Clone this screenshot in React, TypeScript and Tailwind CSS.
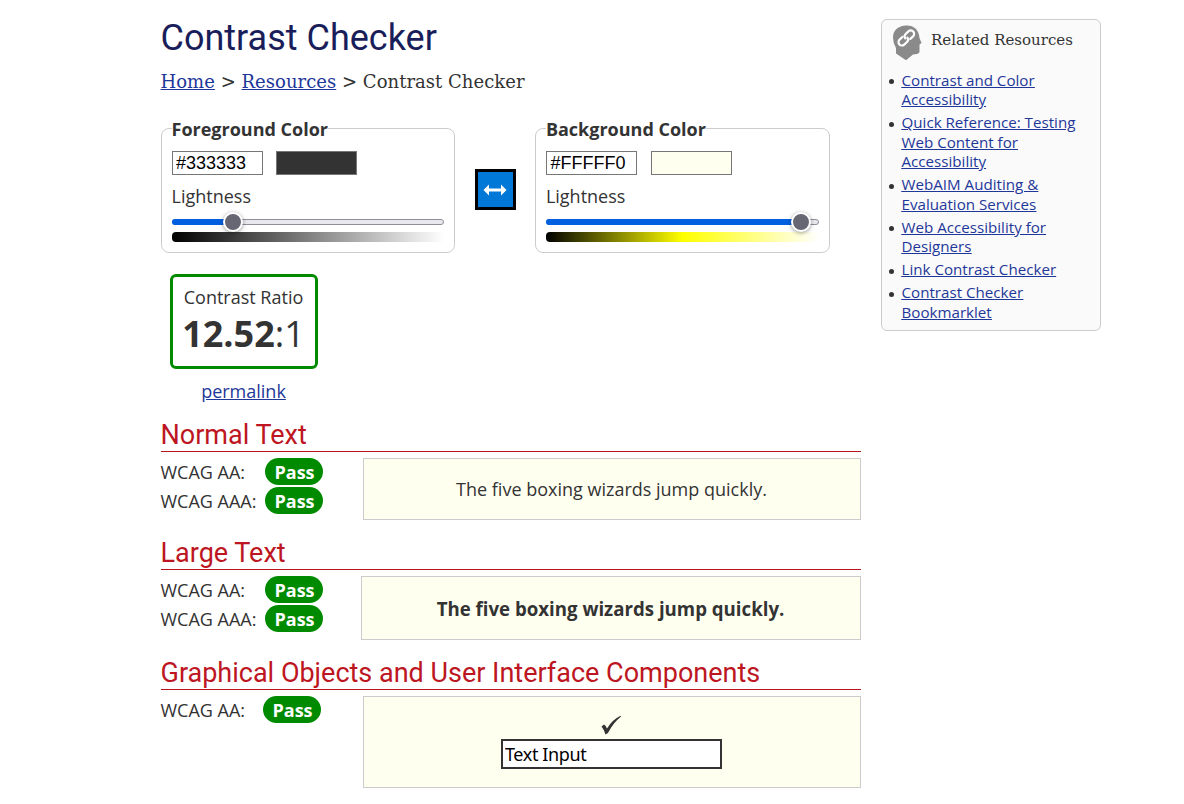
import type { ReactNode } from "react";

const link = "text-[#1e3799] underline";

type ColorPanelProps = {
  title: string;
  value: string;
  swatch: string;
  percent: number;
  gradient: string;
};

function ColorPanel({ title, value, swatch, percent, gradient }: ColorPanelProps) {
  return (
    <fieldset className="h-[137px] w-[294.800px] shrink-0 rounded-lg border border-[#cccccc] px-[10px]">
      <legend className="h-[25px] text-[18px] leading-[26px] font-bold whitespace-nowrap">{title}</legend>
      <div className="mt-[10px] flex gap-[13.700px]">
        <input
          readOnly
          aria-label={`${title} value`}
          value={value}
          className="h-6 w-[91px] border border-[#767676] bg-white px-[3.500px] font-['Liberation_Sans',sans-serif] text-[18px] leading-[20px] text-black outline-none"
        />
        <div className={`h-6 w-[81px] border border-[#767676] ${swatch}`} />
      </div>
      <div className="mt-[8px] h-[26px] text-[18px] leading-[26px]">Lightness</div>
      <div className="relative mt-[10px] flex h-[6px] rounded-full border border-[#8f8f9d] bg-[#e9e9ed]">
        <div className="-my-px -ml-px h-[6px] rounded-full bg-[#0060df]" style={{ width: `${percent}%` }} />
        <div
          className="absolute top-1/2 size-[20px] -translate-x-1/2 -translate-y-1/2 rounded-full border-2 border-white bg-[#676774] shadow-[0_1px_4px_rgba(0,0,0,0.4)]"
          style={{ left: `${percent}%` }}
        />
      </div>
      <div className={`mt-[7px] h-[10px] rounded-[4px] ${gradient}`} />
    </fieldset>
  );
}

function Rating({ label, wide = true }: { label: string; wide?: boolean }) {
  return (
    <div className="flex h-[29px] items-start">
      <span className={`${wide ? "w-[104px]" : "w-[102px]"} text-[18px] leading-[29px] whitespace-nowrap`}>{label}</span>
      <span className="h-[27px] w-[58px] rounded-full bg-[#008a00] pl-[2px] text-center text-[18px] leading-[29px] font-bold text-white">
        Pass
      </span>
    </div>
  );
}

function Section({ title, height, ratings, children }: { title: string; height: string; ratings: ReactNode; children: ReactNode }) {
  return (
    <section className={height}>
      <h2 className="h-[34px] border-b border-[#b81420] font-[Roboto,sans-serif] text-[27px] leading-[34px] whitespace-nowrap text-[#bd1622]">
        {title}
      </h2>
      <div className="flex items-start justify-between pt-[6px]">
        <div>{ratings}</div>
        {children}
      </div>
    </section>
  );
}

const resources = [
  ["Contrast and Color", "Accessibility"],
  ["Quick Reference: Testing", "Web Content for", "Accessibility"],
  ["WebAIM Auditing &", "Evaluation Services"],
  ["Web Accessibility for", "Designers"],
  ["Link Contrast Checker"],
  ["Contrast Checker", "Bookmarklet"],
];

export default function App() {
  return (
    <div className="flex h-[804px] w-[1184px] items-start overflow-hidden bg-white pl-[160.500px] font-['Open_Sans',sans-serif] text-[#333333]">
      <main className="w-[700px] shrink-0 pt-[17px]">
        <h1 className="h-[51px] font-[Roboto,sans-serif] text-[36px] leading-[43px] text-[#191e5a]">Contrast Checker</h1>
        <nav className="h-[48px] font-['DejaVu_Serif',serif] text-[18px] leading-[28px] tracking-[0.030px] whitespace-nowrap">
          <a className={link} href="#home">Home</a> &gt; <a className={link} href="#resources">Resources</a> &gt; Contrast Checker
        </nav>
        <div className="flex">
          <ColorPanel
            title="Foreground Color"
            value="#333333"
            swatch="bg-[#333333]"
            percent={22.3}
            gradient="bg-[linear-gradient(to_right,#000,#808080,#fff)]"
          />
          <button
            aria-label="Swap colors"
            className="mx-[19.300px] mt-[53px] flex h-[41px] w-[41px] shrink-0 items-center justify-center border-[3px] border-black bg-[#0078d7]"
          >
            <svg className="shrink-0" width="24" height="12" viewBox="0 0 24 12" fill="white" aria-hidden="true">
              <path d="M.5 6 6 .5v4h12v-4L23.500 6 18 11.500v-4H6v4z" />
            </svg>
          </button>
          <ColorPanel
            title="Background Color"
            value="#FFFFF0"
            swatch="bg-[#fffff0]"
            percent={93.9}
            gradient="bg-[linear-gradient(to_right,#000,#ff0,#fff)]"
          />
        </div>
        <div className="mt-[21px] ml-[9px] flex h-[144px] w-[148px] flex-col items-center">
          <div className="h-[95px] w-full rounded-md border-[3px] border-[#008a00] text-center">
            <div className="h-[32px] pt-[7px] text-[18px] leading-[26px] whitespace-nowrap">Contrast Ratio</div>
            <div className="text-[36px] leading-[50px] whitespace-nowrap">
              <b>12.52</b>:1
            </div>
          </div>
          <a className={`${link} mt-[9px] text-[18px] leading-[26px]`} href="#permalink">permalink</a>
        </div>
        <Section
          title="Normal Text"
          height="h-[118px]"
          ratings={<><Rating label="WCAG AA:" /><Rating label="WCAG AAA:" /></>}
        >
          <div className="flex h-[62px] w-[498px] items-center justify-center border border-[#cccccc] bg-[#fffff0] text-[18px]">
            The five boxing wizards jump quickly.
          </div>
        </Section>
        <Section
          title="Large Text"
          height="h-[120px]"
          ratings={<><Rating label="WCAG AA:" /><Rating label="WCAG AAA:" /></>}
        >
          <div className="flex h-[64px] w-[500px] items-center justify-center border border-[#cccccc] bg-[#fffff0] pt-[2px] text-[18.670px] font-bold">
            The five boxing wizards jump quickly.
          </div>
        </Section>
        <Section
          title="Graphical Objects and User Interface Components"
          height="h-[140px]"
          ratings={<Rating label="WCAG AA:" wide={false} />}
        >
          <div className="flex h-[92px] w-[498px] flex-col items-center border border-[#cccccc] bg-[#fffff0] pt-[18px]">
            <svg className="mr-[1px] shrink-0" width="22" height="20" viewBox="0 0 22 20" fill="#333333" aria-hidden="true">
              <path d="M1.500 11.500 4 9.500Q5.500 9.800 7 13.500 12 5 20.500.8L21 1.500Q13 8 8 18L5.500 19.500Q4 14.500 1.500 11.500z" />
            </svg>
            <input
              readOnly
              aria-label="Sample text input"
              value="Text Input"
              className="mt-[4px] h-[30px] w-[221px] border-2 border-[#333333] bg-white px-[2px] font-['Noto_Sans',sans-serif] text-[18px] leading-[26px] tracking-[-0.380px] text-black outline-none"
            />
          </div>
        </Section>
      </main>
      <aside className="mt-[19px] ml-5 h-[312px] w-[220px] shrink-0 rounded-md border border-[#cccccc] bg-[#fafafa]">
        <div className="flex h-[50.600px] pl-[10px]">
          <svg className="mt-[5px] shrink-0" width="30" height="36" viewBox="0 0 30 36" aria-hidden="true">
            <path
              fill="#8a8a8a"
              d="M14 .5C22 .2 27 5 27.500 13L29.500 18 27.500 19.500V27Q27 28.500 25 29L21 29.500 14 35.300 4 28.500V23Q1 18 1 12.500C1 5 6.500.8 14 .5z"
            />
            <g transform="rotate(-43 14 13)" fill="none" stroke="white" strokeWidth="2.200" strokeLinecap="round">
              <path d="M12 9.800H8.200a3.400 3.400 0 0 0 0 6.800h3.800a3.400 3.400 0 0 0 3.300-3" />
              <path d="M16.500 16.600h3.800a3.400 3.400 0 0 0 0-6.800h-3.800a3.400 3.400 0 0 0-3.300 3" />
            </g>
          </svg>
          <h2 className="ml-[9.500px] font-['DejaVu_Serif',serif] text-[15px] leading-[40px] whitespace-nowrap">Related Resources</h2>
        </div>
        <ul className="pl-[20px] text-[15.150px] leading-[19.500px]">
          {resources.map((lines) => (
            <li key={lines.join(" ")} className="relative mb-[3.500px]">
              <span className="absolute top-[8.600px] -left-[13px] size-[5px] rounded-full bg-[#333333]" />
              <a className={link} href="#resource">
                {lines.map((line) => (
                  <span key={line} className="block underline whitespace-nowrap">{line}</span>
                ))}
              </a>
            </li>
          ))}
        </ul>
      </aside>
    </div>
  );
}
